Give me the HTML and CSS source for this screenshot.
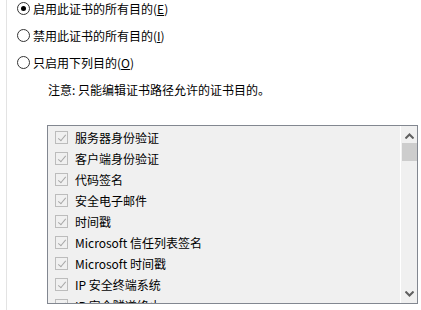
FILE: index.html
```html
<!DOCTYPE html>
<html>
<head>
<meta charset="utf-8">
<link rel="stylesheet" href="styles.css">
</head>
<body>
<div class="page">
  <div class="radio-row"><span class="radio checked"></span><span>启用此证书的所有目的(<u>E</u>)</span></div>
  <div class="radio-row"><span class="radio"></span><span>禁用此证书的所有目的(<u>I</u>)</span></div>
  <div class="radio-row"><span class="radio"></span><span>只启用下列目的(<u>O</u>)</span></div>
  <div class="note">注意: 只能编辑证书路径允许的证书目的。</div>
  <div class="listbox">
    <div class="items">
      <div class="item"><span class="cb"></span><span>服务器身份验证</span></div>
      <div class="item"><span class="cb"></span><span>客户端身份验证</span></div>
      <div class="item"><span class="cb"></span><span>代码签名</span></div>
      <div class="item"><span class="cb"></span><span>安全电子邮件</span></div>
      <div class="item"><span class="cb"></span><span>时间戳</span></div>
      <div class="item"><span class="cb"></span><span>Microsoft 信任列表签名</span></div>
      <div class="item"><span class="cb"></span><span>Microsoft 时间戳</span></div>
      <div class="item"><span class="cb"></span><span>IP 安全终端系统</span></div>
      <div class="item"><span class="cb"></span><span>IP 安全隧道终止</span></div>
    </div>
    <div class="scrollbar">
      <svg class="arrow" width="9" height="6" viewBox="0 0 9 6"><path d="M0.5 5.5 L4.5 1.5 L8.5 5.5" fill="none" stroke="#606060" stroke-width="2"/></svg>
      <div class="thumb"></div>
      <div class="track"></div>
      <svg class="arrow" width="9" height="6" viewBox="0 0 9 6"><path d="M0.5 0.5 L4.5 4.5 L8.5 0.5" fill="none" stroke="#606060" stroke-width="2"/></svg>
    </div>
  </div>
</div>
</body>
</html>
```
FILE: styles.css
```css
html, body {
  margin: 0;
  padding: 0;
  background: #fff;
  height: 100%;
  overflow: hidden;
}
body {
  font-family: "Noto Sans CJK SC", "Noto Sans", sans-serif;
  font-size: 12px;
  color: #000;
}
.page {
  margin-left: 6px;
  border-left: 1px solid #e3e3e3;
  height: 310px;
  box-sizing: border-box;
  padding-left: 10px;
}
.radio-row {
  display: flex;
  align-items: center;
  height: 17px;
  margin-bottom: 10px;
}
.radio {
  width: 11px;
  height: 11px;
  border: 1px solid #333;
  border-radius: 50%;
  margin-right: 3px;
  position: relative;
  box-sizing: content-box;
}
.radio.checked::after {
  content: "";
  position: absolute;
  left: 3px;
  top: 3px;
  width: 5px;
  height: 5px;
  border-radius: 50%;
  background: #000;
}
u {
  text-decoration: underline;
}
.note {
  margin-left: 31px;
  height: 17px;
  line-height: 17px;
  margin-top: 10px;
}
.listbox {
  margin-top: 27px;
  margin-left: 30px;
  width: 369px;
  height: 177px;
  border: 1px solid #828790;
  background: #f0f0f0;
  display: flex;
  overflow: hidden;
}
.items {
  flex: 1;
  padding-top: 1px;
  padding-left: 7px;
}
.item {
  display: flex;
  align-items: center;
  height: 21px;
}
.cb {
  width: 11px;
  height: 11px;
  border: 1px solid #bcbcbc;
  margin-right: 7px;
  position: relative;
  background: #f0f0f0;
}
.cb::after {
  content: "";
  position: absolute;
  left: 4px;
  top: 1px;
  width: 3px;
  height: 7px;
  border-right: 1px solid #a8a8a8;
  border-bottom: 1px solid #a8a8a8;
  transform: rotate(40deg);
}
.scrollbar {
  width: 16px;
  border-left: 1px solid #fff;
  display: flex;
  flex-direction: column;
  align-items: center;
}
.arrow {
  margin: 7px 0 5px;
  flex: none;
}
.scrollbar .arrow:last-child {
  margin: 5px 0 6px;
}
.thumb {
  width: 15px;
  height: 18px;
  background: #cdcdcd;
  margin-top: -1px;
  flex: none;
}
.track {
  flex: 1;
}
```
